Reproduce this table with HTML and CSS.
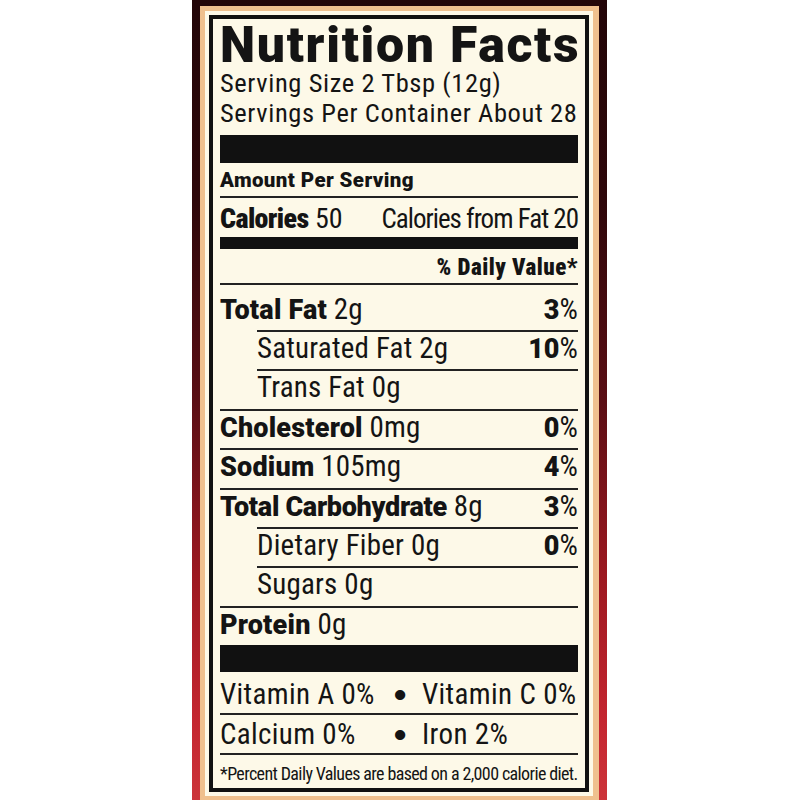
FILE: index.html
```html
<!DOCTYPE html>
<html lang="en">
<head>
<meta charset="utf-8">
<title>Nutrition Facts</title>
<link rel="stylesheet" href="styles.css">
</head>
<body>
<div class="label">
  <div class="tan">
    <div class="cream">
      <section class="facts">
        <h1 class="title">Nutrition Facts</h1>
        <p class="serving">Serving Size 2 Tbsp (12g)<br>Servings Per Container About 28</p>
        <div class="bar bar-thick"></div>
        <div class="amount">Amount Per Serving</div>
        <div class="cal-row"><span><b class="cal-b">Calories</b> 50</span><span class="cal-fat">Calories from Fat 20</span></div>
        <div class="bar bar-mid"></div>
        <div class="dv">% Daily Value*</div>
        <div class="row row-first"><span><b>Total Fat</b> 2g</span><span class="pct"><b>3</b>%</span></div>
        <div class="row sub"><span>Saturated Fat 2g</span><span class="pct"><b>10</b>%</span></div>
        <div class="row sub"><span>Trans Fat 0g</span></div>
        <div class="row"><span><b>Cholesterol</b> 0mg</span><span class="pct"><b>0</b>%</span></div>
        <div class="row"><span><b>Sodium</b> 105mg</span><span class="pct"><b>4</b>%</span></div>
        <div class="row"><span><b class="tight">Total Carbohydrate</b> 8g</span><span class="pct"><b>3</b>%</span></div>
        <div class="row sub"><span>Dietary Fiber 0g</span><span class="pct"><b>0</b>%</span></div>
        <div class="row sub"><span>Sugars 0g</span></div>
        <div class="row"><span><b>Protein</b> 0g</span></div>
        <div class="bar bar-thick2"></div>
        <div class="vit vit-first"><span>Vitamin A 0%</span><span class="dot"><span class="dot-glyph">•</span></span><span class="vit-r">Vitamin C 0%</span></div>
        <div class="vit vit-second"><span>Calcium 0%</span><span class="dot"><span class="dot-glyph">•</span></span><span class="vit-r">Iron 2%</span></div>
        <p class="foot">*Percent Daily Values are based on a 2,000 calorie diet.</p>
      </section>
    </div>
  </div>
</div>
</body>
</html>
```
FILE: styles.css
```css
html, body {
  margin: 0;
  padding: 0;
  background: #ffffff;
  overflow: hidden;
}

.label {
  margin-left: 192px;
  width: 415px;
  height: 800px;
  overflow: hidden;
  box-sizing: border-box;
  padding: 6px 8px 0 8px;
  background: linear-gradient(to bottom, #230608 0%, #2e070a 25%, #5a0e14 50%, #9c1820 72%, #c42630 90%, #cc343a 100%);
}

.tan {
  background: #efc08e;
  padding: 5px 6px 20px 5px;
}

.cream {
  background: #fdf9e8;
  padding: 4px;
}

.facts {
  border: 4px solid #111;
  padding: 0 7px;
  background: #fdf9e8;
  color: #141414;
  font-family: "Roboto Condensed", "Roboto", sans-serif;
  font-stretch: condensed;
}

.title {
  margin: 3px 0 0;
  font-family: "Roboto", sans-serif;
  font-stretch: normal;
  font-weight: 900;
  font-size: 50px;
  line-height: 46px;
  letter-spacing: 1.7px;
  white-space: nowrap;
}

.serving {
  margin: 0;
  font-size: 26.5px;
  line-height: 30px;
  letter-spacing: 0.6px;
  white-space: nowrap;
}

.bar {
  background: #111;
}

.bar-thick {
  margin-top: 7px;
  height: 28px;
}

.bar-mid {
  height: 12px;
}

.bar-thick2 {
  height: 27px;
}

.amount {
  padding-top: 2px;
  line-height: 31px;
  border-bottom: 2px solid #222;
  font-family: "Roboto", sans-serif;
  font-stretch: normal;
  font-weight: 900;
  font-size: 20.5px;
  letter-spacing: 0.4px;
}

.cal-row {
  display: flex;
  justify-content: space-between;
  align-items: baseline;
  height: 39px;
  box-sizing: border-box;
  padding-top: 3px;
  line-height: 36px;
  font-size: 28px;
  white-space: nowrap;
}

.cal-b {
  font-weight: 900;
  letter-spacing: -0.6px;
}

.cal-fat {
  font-size: 27px;
  letter-spacing: -1px;
}

.dv {
  text-align: right;
  padding-top: 3px;
  line-height: 31px;
  font-weight: 900;
  font-size: 23px;
  letter-spacing: 0.5px;
}

.row {
  display: flex;
  justify-content: space-between;
  align-items: baseline;
  height: 39.4px;
  box-sizing: border-box;
  border-top: 2px solid #222;
  font-size: 29px;
  line-height: 32px;
  letter-spacing: 0.2px;
  white-space: nowrap;
}

.row b,
.pct b {
  font-family: "Roboto", sans-serif;
  font-stretch: normal;
  font-weight: 900;
  font-size: 27px;
  letter-spacing: 0.2px;
}

.row b.tight {
  letter-spacing: -0.3px;
}

.row-first {
  height: 47px;
  padding-top: 8px;
}

.sub {
  margin-left: 37px;
}

.pct b {
  font-size: 27px;
  letter-spacing: 0;
}

.vit {
  display: grid;
  grid-template-columns: 162px 36px 1fr;
  align-items: baseline;
  box-sizing: border-box;
  font-size: 29px;
  line-height: 36px;
  letter-spacing: 0.35px;
  white-space: nowrap;
}

.vit-first {
  height: 41px;
  padding-top: 4px;
}

.vit-second {
  height: 40px;
  padding-top: 1px;
  border-top: 2px solid #222;
}

.dot {
  text-align: center;
}

.dot-glyph {
  display: inline-block;
  font-family: "Liberation Sans", sans-serif;
  transform: scale(1.3);
}

.vit-r {
  padding-left: 4px;
}

.foot {
  margin: 0;
  border-top: 2px solid #222;
  padding: 7.7px 0 3.3px;
  font-size: 18px;
  line-height: 22px;
  letter-spacing: -0.62px;
  white-space: nowrap;
}
```
